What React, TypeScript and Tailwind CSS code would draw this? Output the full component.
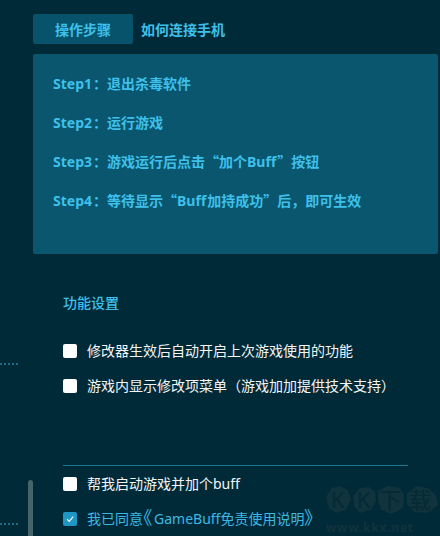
import React from "react";

const font = { fontFamily: '"Noto Sans", "Noto Sans CJK SC", sans-serif' };

function Box({ checked }: { checked?: boolean }) {
  return checked ? (
    <span className="flex h-[14px] w-[14px] shrink-0 items-center justify-center rounded-[2px] bg-[#1f97c4]">
      <svg width="10" height="10" viewBox="0 0 10 10" fill="none">
        <path d="M2 5.2 L4.2 7.4 L8.2 2.6" stroke="#fff" strokeWidth="1.1" />
      </svg>
    </span>
  ) : (
    <span className="h-[14px] w-[14px] shrink-0 rounded-[2px] bg-white" />
  );
}

function Row({ children, checked, className }: { children: React.ReactNode; checked?: boolean; className: string }) {
  return (
    <div className={"flex h-[20px] items-center gap-[10px] text-[14px] " + className}>
      <Box checked={checked} />
      <span className="whitespace-nowrap pb-[2px]">{children}</span>
    </div>
  );
}

function Q({ children }: { children: string }) {
  return <span className="font-['Noto_Sans_CJK_SC']">{children}</span>;
}

function S({ children }: { children: string }) {
  return <span className="mr-[1px]">{children}</span>;
}

const steps: React.ReactNode[] = [
  <><S>Step1</S><Q>：</Q>退出杀毒软件</>,
  <><S>Step2</S><Q>：</Q>运行游戏</>,
  <><S>Step3</S><Q>：</Q>游戏运行后点击<Q>“</Q>加个<S>Buff</S><Q>”</Q>按钮</>,
  <><S>Step4</S><Q>：</Q>等待显示<Q>“</Q><S>Buff</S>加持成功<Q>”</Q>后，即可生效</>,
];

const blobs = [
  "M2 14 L8 5 L16 3 L24 7 L27 16 L22 27 L12 30 L5 25 Z",
  "M29 13 L36 5 L45 4 L51 9 L52 18 L47 27 L36 30 L30 23 Z",
  "M54 8 L64 3 L76 5 L80 12 L79 25 L68 31 L57 27 L54 18 Z",
  "M83 11 L92 3 L104 5 L112 12 L114 22 L104 30 L90 29 L83 21 Z",
];

export default function App() {
  return (
    <div className="relative h-[536px] w-[440px] overflow-hidden bg-[#012a39]" style={font}>
      <div className="flex flex-col pl-[33px] pr-[2px] pt-[14px]">
        <div className="flex h-[30px] items-center gap-[8px] text-[14px] font-bold text-[#3ec0ea]">
          <div className="flex h-[30px] w-[100px] items-center justify-center rounded-[2px] bg-[#06536b]">操作步骤</div>
          <div>如何连接手机</div>
        </div>
        <div className="mt-[10px] flex h-[200px] flex-col gap-[19px] rounded-[2px] bg-[#09566e] pl-[20px] pt-[19px] text-[14px] font-bold text-[#3ec0ea]">
          {steps.map((s, i) => (
            <div key={i} className="h-[20px] leading-[20px] whitespace-nowrap">{s}</div>
          ))}
        </div>
      </div>

      <div className="ml-[63px] mr-[32px] flex flex-col">
        <div className="mt-[39px] h-[20px] text-[14px] font-medium leading-[20px] text-[#3ec0ea]">功能设置</div>
        <div className="mt-[28px] flex flex-col gap-[15px]">
          <Row className="text-[#f2f6f7]">修改器生效后自动开启上次游戏使用的功能</Row>
          <Row className="text-[#f2f6f7]">游戏内显示修改项菜单（游戏加加提供技术支持）</Row>
        </div>
        <div className="mt-[69px] h-px bg-[#1d7898]" />
        <div className="mt-[8px] flex flex-col gap-[15px]">
          <Row className="text-[#f2f6f7]">帮我启动游戏并加个buff</Row>
          <Row checked className="text-[#3cb8e2]">
            我已同意<span className="mr-[2px] text-[18px] leading-none [font-feature-settings:'palt']">《</span>GameBuff免责使用说明<span className="text-[18px] leading-none [font-feature-settings:'palt']">》</span>
          </Row>
        </div>
      </div>

      <div className="absolute left-0 top-[363px] w-[18px] border-t-2 border-dotted border-[#1d6a85]" />
      <div className="absolute left-0 top-[523px] w-[18px] border-t-2 border-dotted border-[#1d6a85]" />
      <div className="absolute left-[28px] top-[480px] h-[60px] w-[5px] rounded-full bg-[#45636b]" />

      <div className="absolute left-[324px] top-[483px] w-[116px]">
        <svg width="116" height="33" viewBox="0 0 116 33" className="absolute left-0 top-0">
          {blobs.map((d) => (
            <path key={d} d={d} fill="#10333d" />
          ))}
        </svg>
        <div className="relative flex h-[33px] items-center text-[22px] font-normal leading-[33px] text-[#042a36]">
          <span className="w-[27px] text-center">K</span>
          <span className="w-[25px] text-center">K</span>
          <span className="w-[28px] text-center">下</span>
          <span className="w-[32px] text-center">载</span>
        </div>
        <div className="mt-[5px] whitespace-nowrap pl-[2px] text-[12px] font-bold leading-[14px] tracking-[0.8px] text-[#10333d]">www.kkx.net</div>
      </div>
    </div>
  );
}
